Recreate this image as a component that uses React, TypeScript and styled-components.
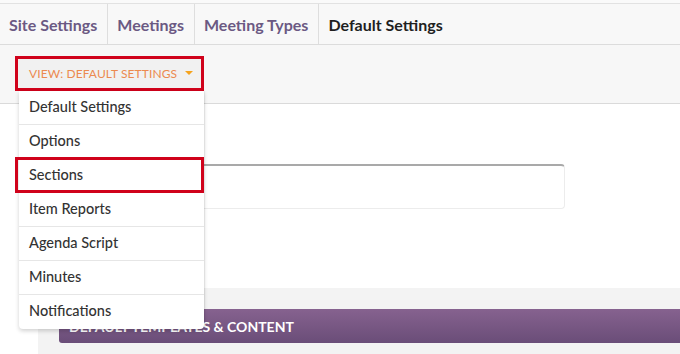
import styled, { createGlobalStyle } from "styled-components";

const GlobalStyle = createGlobalStyle`
  body {
    margin: 0;
    background: #fff;
    font-family: "Lato", "Liberation Sans", sans-serif;
    overflow: hidden;
  }
`;

const tabs = ["Site Settings", "Meetings", "Meeting Types", "Default Settings"];
const menuItems = [
  "Default Settings",
  "Options",
  "Sections",
  "Item Reports",
  "Agenda Script",
  "Minutes",
  "Notifications",
];

const App: React.FC = () => {
  return (
    <Page>
      <GlobalStyle />
      <TabBar>
        {tabs.map((t, i) => (
          <Tab key={t} $active={i === tabs.length - 1}>
            {t}
          </Tab>
        ))}
      </TabBar>
      <Toolbar>
        <ViewButton>
          VIEW: DEFAULT SETTINGS
          <Caret />
        </ViewButton>
        <Menu>
          {menuItems.map((m) => (
            <MenuItem key={m} $marked={m === "Sections"}>
              {m}
            </MenuItem>
          ))}
        </Menu>
      </Toolbar>
      <Main>
        <FormArea>
          <TextBox />
        </FormArea>
        <Panel>
          <PanelHeader>DEFAULT TEMPLATES &amp; CONTENT</PanelHeader>
        </Panel>
      </Main>
    </Page>
  );
};

export default App;

const Page = styled.div`
  width: 680px;
  height: 354px;
  overflow: hidden;
  padding-top: 3px;
  box-sizing: border-box;
  background: #fafafa;
`;

const TabBar = styled.div`
  display: flex;
  height: 40px;
  border-top: 1px solid #e2e2e2;
  border-bottom: 1px solid #dcdcdc;
  background: #f8f8f8;
`;

const Tab = styled.div<{ $active?: boolean }>`
  display: flex;
  align-items: center;
  padding: 0 10px 0 9px;
  font-size: 16px;
  font-weight: 700;
  color: ${(p) => (p.$active ? "#1f1f1f" : "#6b5983")};
  border-right: ${(p) => (p.$active ? "none" : "1px solid #dedede")};
`;

const Toolbar = styled.div`
  position: relative;
  height: 59px;
  box-sizing: border-box;
  padding: 14px 0 0 18px;
  background: #f7f7f7;
  border-bottom: 1px solid #dadada;
`;

const ViewButton = styled.div`
  display: flex;
  align-items: center;
  justify-content: space-between;
  width: 183px;
  height: 29px;
  box-sizing: border-box;
  padding: 0 8px 1px 11px;
  background: #f1f1f1;
  color: #ec8a4f;
  font-size: 12px;
  letter-spacing: 0.1px;
  outline: 3px solid #d0021b;
`;

const Caret = styled.span`
  width: 0;
  height: 0;
  border-left: 4px solid transparent;
  border-right: 4px solid transparent;
  border-top: 4px solid #f5a31e;
`;

const Menu = styled.ul`
  position: absolute;
  top: 46px;
  left: 19px;
  z-index: 5;
  width: 185px;
  margin: 0;
  padding: 0;
  list-style: none;
  background: #fff;
  border-radius: 0 0 4px 4px;
  box-shadow: 0 2px 4px rgba(0, 0, 0, 0.18), 1px 0 1px rgba(0, 0, 0, 0.06);
`;

const MenuItem = styled.li<{ $marked?: boolean }>`
  position: relative;
  display: flex;
  align-items: center;
  height: 34px;
  box-sizing: border-box;
  padding: 0 10px 3px;
  font-size: 14.5px;
  font-weight: 500;
  color: #333;
  border-bottom: 1px solid #e6e6e6;
  &:last-child {
    border-bottom: none;
  }
  ${(p) =>
    p.$marked &&
    `
    &::after {
      content: "";
      position: absolute;
      top: -2px;
      bottom: -1px;
      left: -4px;
      right: 0;
      border: 3px solid #d0021b;
    }
  `}
`;

const Main = styled.div`
  background: #fff;
  padding-left: 38px;
`;

const FormArea = styled.div`
  height: 184px;
  box-sizing: border-box;
  padding-top: 60px;
`;

const TextBox = styled.div`
  width: 527px;
  height: 45px;
  box-sizing: border-box;
  border: 1px solid #ececec;
  border-top: 2px solid #a9a9a9;
  border-radius: 4px;
  background: #fff;
`;

const Panel = styled.div`
  height: 45px;
  padding: 21px 0 0 21px;
  background: #f3f3f3;
`;

const PanelHeader = styled.div`
  display: flex;
  align-items: center;
  height: 34px;
  padding-left: 10px;
  border-radius: 3px 0 0 3px;
  background: linear-gradient(#86628f, #6a4d78);
  color: #fff;
  font-size: 14px;
  font-weight: 700;
`;
